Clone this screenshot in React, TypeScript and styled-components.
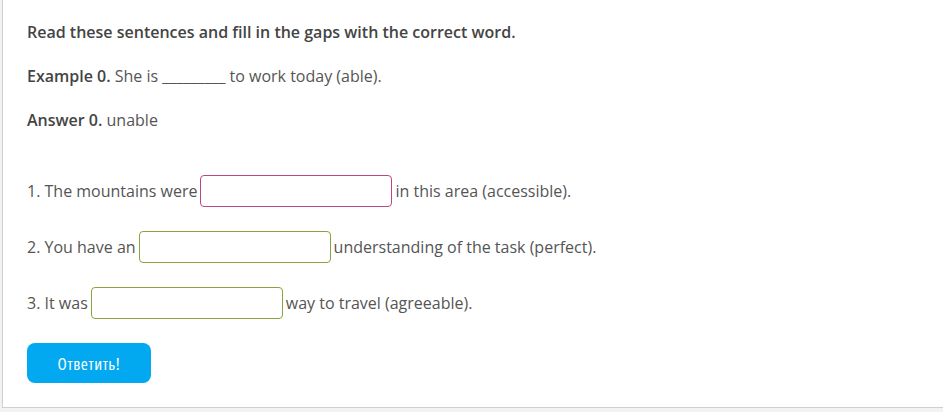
import styled, { createGlobalStyle } from 'styled-components';

const GlobalStyle = createGlobalStyle`
  html, body {
    margin: 0;
    padding: 0;
    background: #f2f2f2;
    overflow: hidden;
  }
`;

const Page = styled.div`
  height: 412px;
  overflow: hidden;
`;

const Card = styled.div`
  margin-left: 2px;
  width: 1000px;
  height: 408px;
  background: #fff;
  border-left: 1px solid #cfcfcf;
  border-bottom: 1px solid #cfcfcf;
  box-sizing: border-box;
  padding: 20px 0 0 24px;
  font-family: 'Open Sans', 'Liberation Sans', sans-serif;
  font-size: 16px;
  color: #555;
`;

const Para = styled.p<{ $gap: number }>`
  margin: 0 0 ${p => p.$gap}px;
  line-height: 24px;
`;

const Strong = styled.span`
  font-weight: 600;
  color: #444;
`;

const Row = styled.div`
  height: 32px;
  line-height: 32px;
  margin-bottom: 24px;
  display: flex;
  align-items: center;
  white-space: pre;
`;

const Gap = styled.input<{ $tone: 'error' | 'ok' }>`
  width: 192px;
  height: 32px;
  box-sizing: border-box;
  margin: 0 3px;
  border: 1px solid ${p => (p.$tone === 'error' ? '#b8487f' : '#8ca23c')};
  border-radius: 4px;
  background: #fff;
  outline: none;
  font: inherit;
  padding: 0 8px;
`;

const SubmitButton = styled.button`
  display: block;
  width: 124px;
  height: 40px;
  margin: 0;
  border: none;
  border-radius: 8px;
  background: #03a9f0;
  color: #fff;
  font-family: 'Liberation Sans Narrow', 'Open Sans', sans-serif;
  font-stretch: condensed;
  font-size: 17px;
  letter-spacing: 0.6px;
  cursor: pointer;
`;

const items = [
  { before: '1. The mountains were', after: 'in this area (accessible).', tone: 'error' as const },
  { before: '2. You have an', after: 'understanding of the task (perfect).', tone: 'ok' as const },
  { before: '3. It was', after: 'way to travel (agreeable).', tone: 'ok' as const },
];

const App = () => {
  return (
    <Page>
      <GlobalStyle />
      <Card>
        <Para $gap={20}>
          <Strong>Read these sentences and fill in the gaps with the correct word.</Strong>
        </Para>
        <Para $gap={20}>
          <Strong>Example 0.</Strong> She is _________ to work today (able).
        </Para>
        <Para $gap={43}>
          <Strong>Answer 0.</Strong> unable
        </Para>
        {items.map((item, i) => (
          <Row key={i}>
            <span>{item.before}</span>
            <Gap $tone={item.tone} />
            <span>{item.after}</span>
          </Row>
        ))}
        <SubmitButton>Ответить!</SubmitButton>
      </Card>
    </Page>
  );
};

export default App;
